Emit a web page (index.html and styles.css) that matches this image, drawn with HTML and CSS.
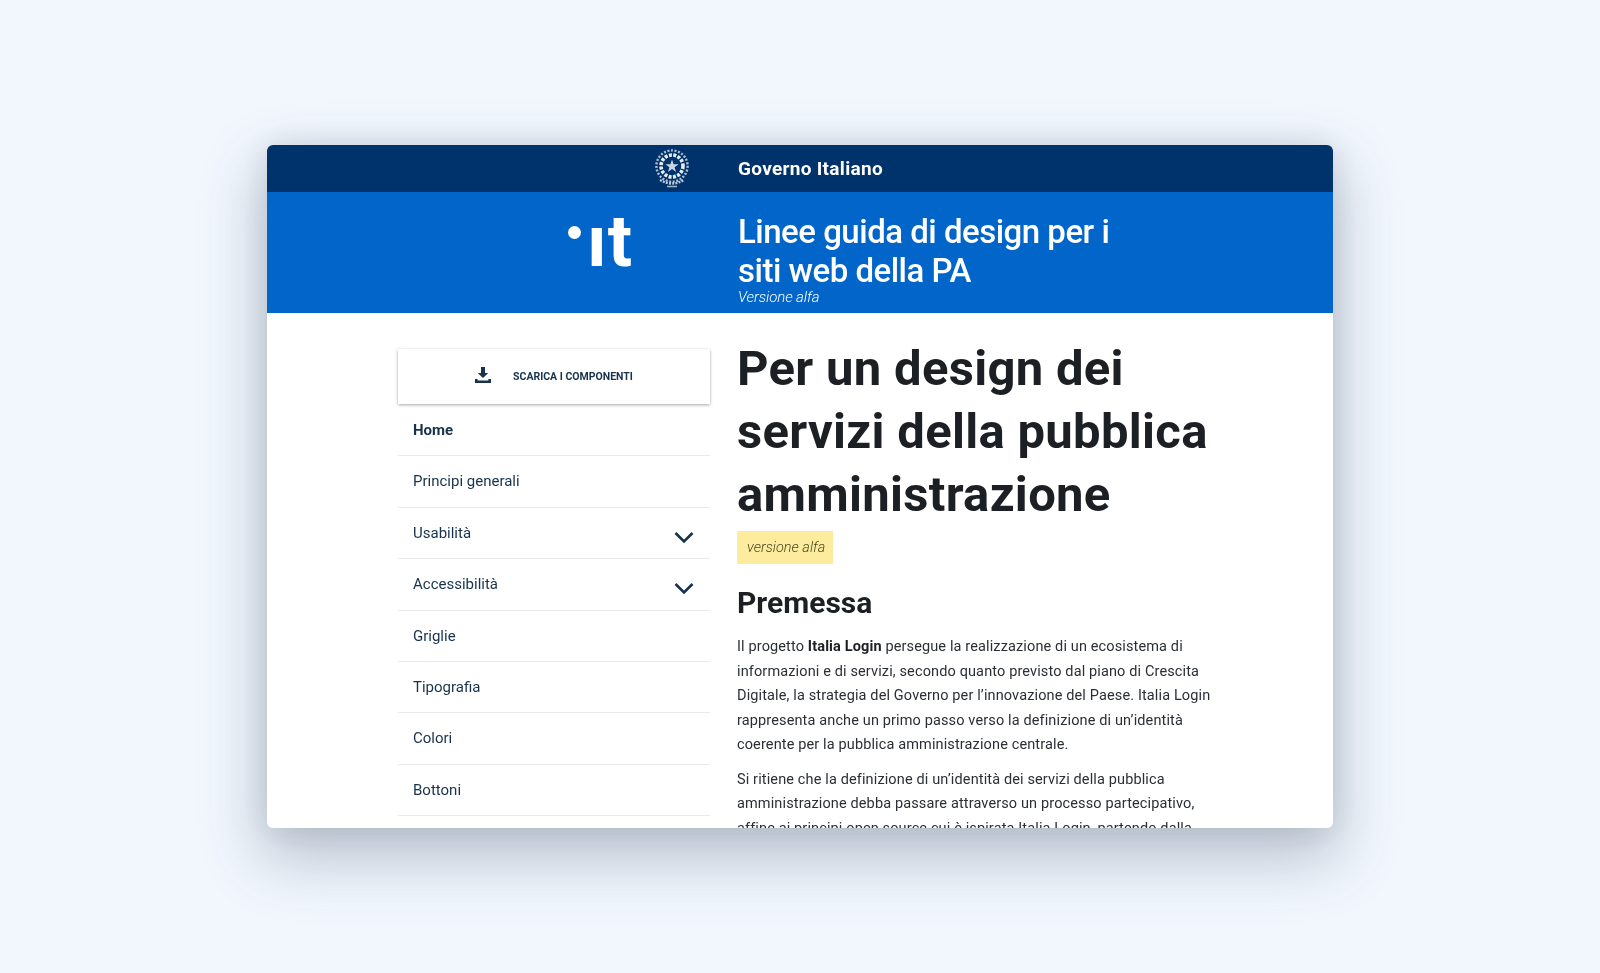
FILE: index.html
```html
<!DOCTYPE html>
<html lang="it">
<head>
<meta charset="utf-8">
<title>Linee guida di design per i siti web della PA</title>
<link rel="stylesheet" href="styles.css">
</head>
<body>
<div class="window">
  <div class="topbar">
    <div class="left-col">
      <svg class="emblem" viewBox="0 0 36 40" aria-hidden="true">
        <g fill="none" stroke="#e9eef5">
          <circle cx="18" cy="17" r="11" stroke-width="3.6" stroke-dasharray="3 1.4"/>
          <circle cx="18" cy="17" r="15.6" stroke-width="2.4" stroke-dasharray="2 1.6" opacity=".75"/>
          <path d="M6 31 Q18 38 30 31" stroke-width="2.4" stroke-dasharray="2 1.2" opacity=".8"/>
          <path d="M13 37.500h10" stroke-width="1.5" opacity=".7"/>
        </g>
        <polygon fill="#c9d5e6" points="18,10.500 19.600,15.200 24.600,15.200 20.600,18.200 22.100,23 18,20.100 13.900,23 15.400,18.200 11.400,15.200 16.400,15.200"/>
      </svg>
    </div>
    <div class="gov">Governo Italiano</div>
  </div>
  <div class="brand">
    <div class="left-col">
      <div class="logo"><span class="logo-dot"></span><span class="logo-text">ıt</span></div>
    </div>
    <div class="brand-text">
      <div class="brand-title">Linee guida di design per i<br>siti web della PA</div>
      <div class="brand-sub">Versione alfa</div>
    </div>
  </div>
  <div class="body">
    <nav class="side">
      <a class="download">
        <svg class="dl-icon" viewBox="0 0 16 16" aria-hidden="true"><path d="M6 0h4v6h3.200L8 11 2.800 6H6zM0 12h2.600v1.600h10.800V12H16v4H0z"/></svg>
        <span>SCARICA I COMPONENTI</span>
      </a>
      <ul class="menu">
        <li class="item active">Home</li>
        <li class="item">Principi generali</li>
        <li class="item">Usabilità<svg class="chev" viewBox="0 0 20 13" aria-hidden="true"><path d="M1.500 2 10 10.500 18.500 2"/></svg></li>
        <li class="item">Accessibilità<svg class="chev" viewBox="0 0 20 13" aria-hidden="true"><path d="M1.500 2 10 10.500 18.500 2"/></svg></li>
        <li class="item">Griglie</li>
        <li class="item">Tipografia</li>
        <li class="item">Colori</li>
        <li class="item">Bottoni</li>
      </ul>
    </nav>
    <main class="content">
      <h1>Per un design dei servizi della pubblica amministrazione</h1>
      <span class="tag">versione alfa</span>
      <h2>Premessa</h2>
      <p>Il progetto <strong>Italia Login</strong> persegue la realizzazione di un ecosistema di informazioni e di servizi, secondo quanto previsto dal piano di Crescita Digitale, la strategia del Governo per l’innovazione del Paese. Italia Login rappresenta anche un primo passo verso la definizione di un’identità coerente per la pubblica amministrazione centrale.</p>
      <p>Si ritiene che la definizione di un’identità dei servizi della pubblica amministrazione debba passare attraverso un processo partecipativo, affine ai principi open source cui è ispirata Italia Login, partendo dalla</p>
    </main>
  </div>
</div>
</body>
</html>
```
FILE: styles.css
```css
* { box-sizing: border-box; }
html, body { margin: 0; height: 100%; }
body {
  background: #f2f7fe;
  padding: 145px 267px;
  font-family: "Roboto", "Liberation Sans", sans-serif;
  overflow: hidden;
}
.window {
  width: 1066px;
  height: 683px;
  background: #fff;
  border-radius: 6px;
  overflow: hidden;
  box-shadow: 0 26px 60px 6px rgba(60, 75, 100, .3), 0 0 30px rgba(60, 75, 100, .14);
  filter: blur(.4px);
}
.topbar {
  height: 47px;
  background: #00336b;
  display: flex;
  align-items: center;
}
.left-col {
  width: 471px;
  flex: none;
  display: flex;
  justify-content: flex-end;
}
.emblem { width: 36px; height: 40px; margin-right: 48px; }
.gov { font-size: 19px; font-weight: 700; color: #fff; letter-spacing: .3px; }
.brand {
  height: 121px;
  background: #0265ca;
  display: flex;
}
.logo {
  display: flex;
  align-items: center;
  height: 100%;
  margin-right: 105px;
  color: #fff;
}
.logo-dot {
  width: 13px; height: 13px; border-radius: 50%;
  background: #fff;
  margin-right: 6px;
  margin-bottom: 40px;
}
.logo-text {
  font-size: 72px;
  font-weight: 700;
  line-height: 1;
  letter-spacing: 1px;
  margin-bottom: 22px;
}
.brand-text { color: #fff; padding-top: 20px; }
.brand-title { font-size: 33px; line-height: 39px; font-weight: 500; letter-spacing: -.5px; }
.brand-sub { font-size: 15px; font-style: italic; font-weight: 300; line-height: 16px; margin-top: -1px; letter-spacing: -.1px; }
.body { display: flex; padding-top: 36px; }
.side { width: 312px; margin-left: 131px; margin-right: 27px; flex: none; }
.download {
  height: 55px;
  margin-bottom: 1px;
  display: flex;
  align-items: center;
  justify-content: center;
  gap: 22px;
  box-shadow: 0 1px 3px rgba(0, 0, 0, .35);
  color: #17324d;
  font-size: 10.5px;
  font-weight: 700;
}
.dl-icon { width: 16px; height: 16px; fill: #17324d; margin-top: -3px; }
.menu { list-style: none; margin: 0; padding: 0; }
.item {
  height: 51.4px;
  padding: 16px 15px 0;
  border-bottom: 1px solid #e8eaed;
  font-size: 15px;
  color: #17324d;
  position: relative;
}
.item.active { font-weight: 700; }
.chev {
  position: absolute;
  right: 16px;
  top: 23px;
  width: 20px;
  height: 13px;
  fill: none;
  stroke: #17324d;
  stroke-width: 2.6;
}
.content { width: 480px; color: #1c2024; }
h1 {
  margin: -12px 0 0;
  font-size: 49px;
  line-height: 63px;
  font-weight: 700;
  letter-spacing: .3px;
}
.tag {
  display: inline-block;
  background: #fdec9e;
  color: #4b4a20;
  font-size: 14.5px;
  font-style: italic;
  font-weight: 300;
  height: 33px;
  line-height: 33px;
  padding: 0 8px 0 10px;
  margin-top: 5px;
}
h2 { margin: 21px 0 14px; font-size: 30px; line-height: 36px; font-weight: 700; }
p { margin: 0 0 10px; font-size: 14.5px; line-height: 24.5px; color: #2a2f35; letter-spacing: .13px; }
strong { font-weight: 700; color: #1c2024; }
```
